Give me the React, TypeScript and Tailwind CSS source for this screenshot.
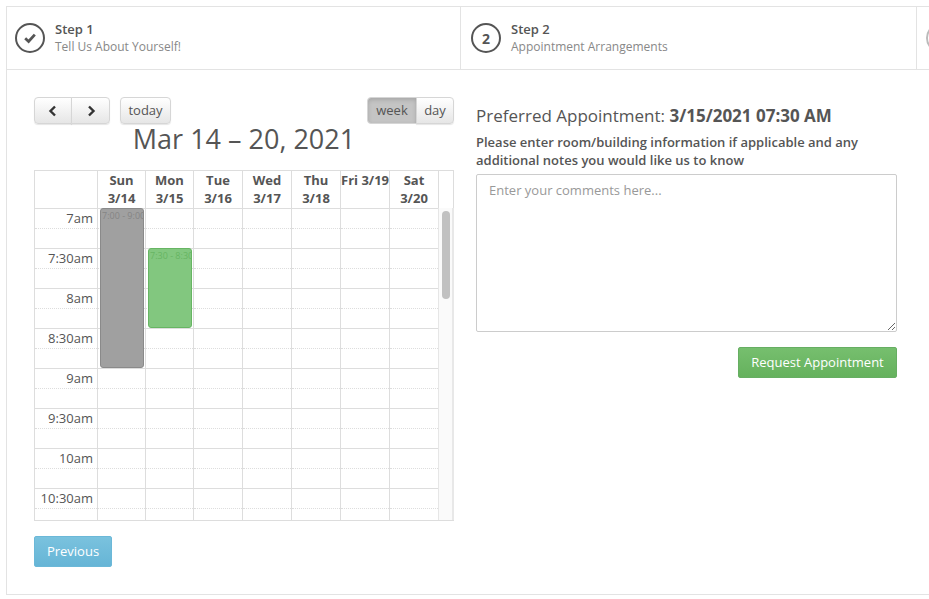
const days = [
  { top: 'Sun', bottom: '3/14', width: 'w-[48px]' },
  { top: 'Mon', bottom: '3/15', width: 'w-[48px]' },
  { top: 'Tue', bottom: '3/16', width: 'w-[49px]' },
  { top: 'Wed', bottom: '3/17', width: 'w-[49px]' },
  { top: 'Thu', bottom: '3/18', width: 'w-[49px]' },
  { top: 'Fri 3/19', bottom: '', width: 'w-[49px]' },
  { top: 'Sat', bottom: '3/20', width: 'w-[49px]' },
];

const times = ['7am', '7:30am', '8am', '8:30am', '9am', '9:30am', '10am', '10:30am'];

function Step({ title, text, className, icon }: { title: string; text: string; className: string; icon: React.ReactNode }) {
  return (
    <div className={`${className} shrink-0 h-full flex items-center border-r border-[#e3e3e3]`}>
      <div className="w-[30px] h-[30px] rounded-full border-2 border-[#555] flex items-center justify-center text-[#555] text-[14px] font-bold shrink-0">
        {icon}
      </div>
      <div className="ml-[10px]">
        <div className="text-[13px] leading-[17px] font-semibold text-[#555]">{title}</div>
        <div className="text-[12px] leading-[17px] text-[#888]">{text}</div>
      </div>
    </div>
  );
}

function CalButton({ children, className }: { children: React.ReactNode; className: string }) {
  return (
    <button className={`h-[27px] flex items-center justify-center border border-[#d6d6d6] text-[13px] text-[#555] shadow-[0_1px_1px_rgba(0,0,0,0.1)] ${className}`}>
      {children}
    </button>
  );
}

function Chevron({ d }: { d: string }) {
  return (
    <svg width="12" height="12" viewBox="0 0 12 12" className="text-[#333]">
      <path d={d} fill="none" stroke="currentColor" strokeWidth="2.4" />
    </svg>
  );
}

function Calendar() {
  return (
    <div className="w-[420px]">
      <div className="flex items-start justify-between">
        <div className="flex">
          <CalButton className="w-[38px] rounded-l-[4px] bg-gradient-to-b from-white to-[#e6e6e6]">
            <Chevron d="M8 1.5 3.5 6 8 10.5" />
          </CalButton>
          <CalButton className="w-[39px] -ml-px rounded-r-[4px] bg-gradient-to-b from-white to-[#e6e6e6]">
            <Chevron d="M4 1.5 8.5 6 4 10.5" />
          </CalButton>
          <CalButton className="w-[51px] ml-[10px] rounded-[4px] bg-gradient-to-b from-white to-[#e6e6e6]">today</CalButton>
        </div>
        <div className="flex">
          <CalButton className="w-[50px] rounded-l-[4px] bg-[#c4c4c4] shadow-[inset_0_2px_4px_rgba(0,0,0,0.15)]">week</CalButton>
          <CalButton className="w-[38px] -ml-px rounded-r-[4px] bg-gradient-to-b from-white to-[#e6e6e6]">day</CalButton>
        </div>
      </div>
      <h2 className="text-center text-[27px] leading-[30px] text-[#555] mb-[16px]">Mar 14 – 20, 2021</h2>

      <div className="border-l border-[#ddd] w-[420px]">
        <div className="flex h-[38px] border-t border-[#ddd]">
          <div className="w-[62px] shrink-0"></div>
          {days.map((d) => (
            <div key={d.top} className={`${d.width} shrink-0 border-l border-[#ddd] text-center text-[13px] leading-[18px] font-bold text-[#555] whitespace-nowrap`}>
              <div>{d.top}</div>
              <div>{d.bottom}</div>
            </div>
          ))}
          <div className="flex-1 border-l border-r border-[#ddd]"></div>
        </div>

        <div className="relative h-[313px] overflow-hidden border-b border-[#ddd] flex">
          <div className="w-[403px] shrink-0">
            {times.map((t) => (
              <div key={t} className="h-10 flex border-t border-[#ddd]">
                <div className="w-[62px] h-[20px] shrink-0 pr-[4px] border-b border-dotted border-[#ddd] text-right text-[13px] leading-[19px] text-[#555]">{t}</div>
                {days.map((d) => (
                  <div key={d.top} className={`${d.width} shrink-0 border-l border-[#ddd]`}>
                    <div className="h-[20px] border-b border-dotted border-[#ddd]"></div>
                  </div>
                ))}
              </div>
            ))}
          </div>
          <div className="flex-1 bg-[#fafafa] border-l border-[#e6e6e6] border-r-2 border-r-[#e8e8e8] pt-[3px] pl-[3px]">
            <div className="w-[8px] h-[88px] rounded-[4px] bg-[#c1c1c1]"></div>
          </div>
          {/* events sit on top of the slots */}
          <div className="absolute left-[65px] top-0 w-[44px] h-[160px] rounded-[3px] bg-[#a0a0a0] border border-[#8a8a8a] text-[9px] leading-[13px] text-[#858585] pl-[1px] overflow-hidden whitespace-nowrap">
            7:00 - 9:00
          </div>
          <div className="absolute left-[113px] top-[40px] w-[44px] h-[80px] rounded-[3px] bg-[#82c77f] border border-[#67b563] text-[9px] leading-[13px] text-[#67b563] pl-[1px] overflow-hidden whitespace-nowrap">
            7:30 - 8:30
          </div>
        </div>
      </div>

      <button className="mt-[15px] w-[78px] h-[31px] rounded-[2px] border border-[#6bb8d8] bg-gradient-to-b from-[#7ac2de] to-[#66b5d6] text-[13px] text-white">Previous</button>
    </div>
  );
}

export default function App() {
  return (
    <div className="w-[929px] h-[599px] overflow-hidden bg-white pt-[6px] pl-[6px] [font-family:'Open_Sans',sans-serif]">
      <div className="w-[1000px] h-[589px] border border-[#e3e3e3]">
        <div className="flex h-[63px] border-b border-[#e3e3e3]">
          <Step
            title="Step 1"
            text="Tell Us About Yourself!"
            className="w-[454px] pl-[8px]"
            icon={
              <svg width="14" height="14" viewBox="0 0 14 14">
                <path d="M2.2 7.2 5.6 10.4 11.8 3.6" fill="none" stroke="currentColor" strokeWidth="2.8" />
              </svg>
            }
          />
          <Step title="Step 2" text="Appointment Arrangements" className="w-[456px] pl-[10px]" icon="2" />
          <div className="flex-1 pl-[9px] pt-[16px]">
            <div className="w-[30px] h-[30px] rounded-full border-2 border-[#bbb]"></div>
          </div>
        </div>

        <div className="flex pl-[27px] pt-[27px]">
          <Calendar />
          <div className="w-[421px] ml-[22px] pt-[7px]">
            <div className="text-[17px] leading-[24px] text-[#555]">
              Preferred Appointment: <b className="font-bold">3/15/2021 07:30 AM</b>
            </div>
            <div className="mt-[5px] text-[13px] leading-[18px] font-semibold text-[#555]">
              Please enter room/building information if applicable and any additional notes you would like us to know
            </div>
            <textarea
              placeholder="Enter your comments here..."
              className="block mt-[5px] w-[421px] h-[158px] border border-[#ccc] rounded-[2px] px-[12px] py-[6px] text-[13px] leading-[19px] text-[#555] placeholder:text-[#999] outline-none"
            />
            <div className="flex justify-end mt-[15px]">
              <button className="w-[159px] h-[31px] rounded-[2px] border border-[#66ae62] bg-gradient-to-b from-[#76bf6e] to-[#65b15d] text-[13px] text-white">
                Request Appointment
              </button>
            </div>
          </div>
        </div>
      </div>
    </div>
  );
}
